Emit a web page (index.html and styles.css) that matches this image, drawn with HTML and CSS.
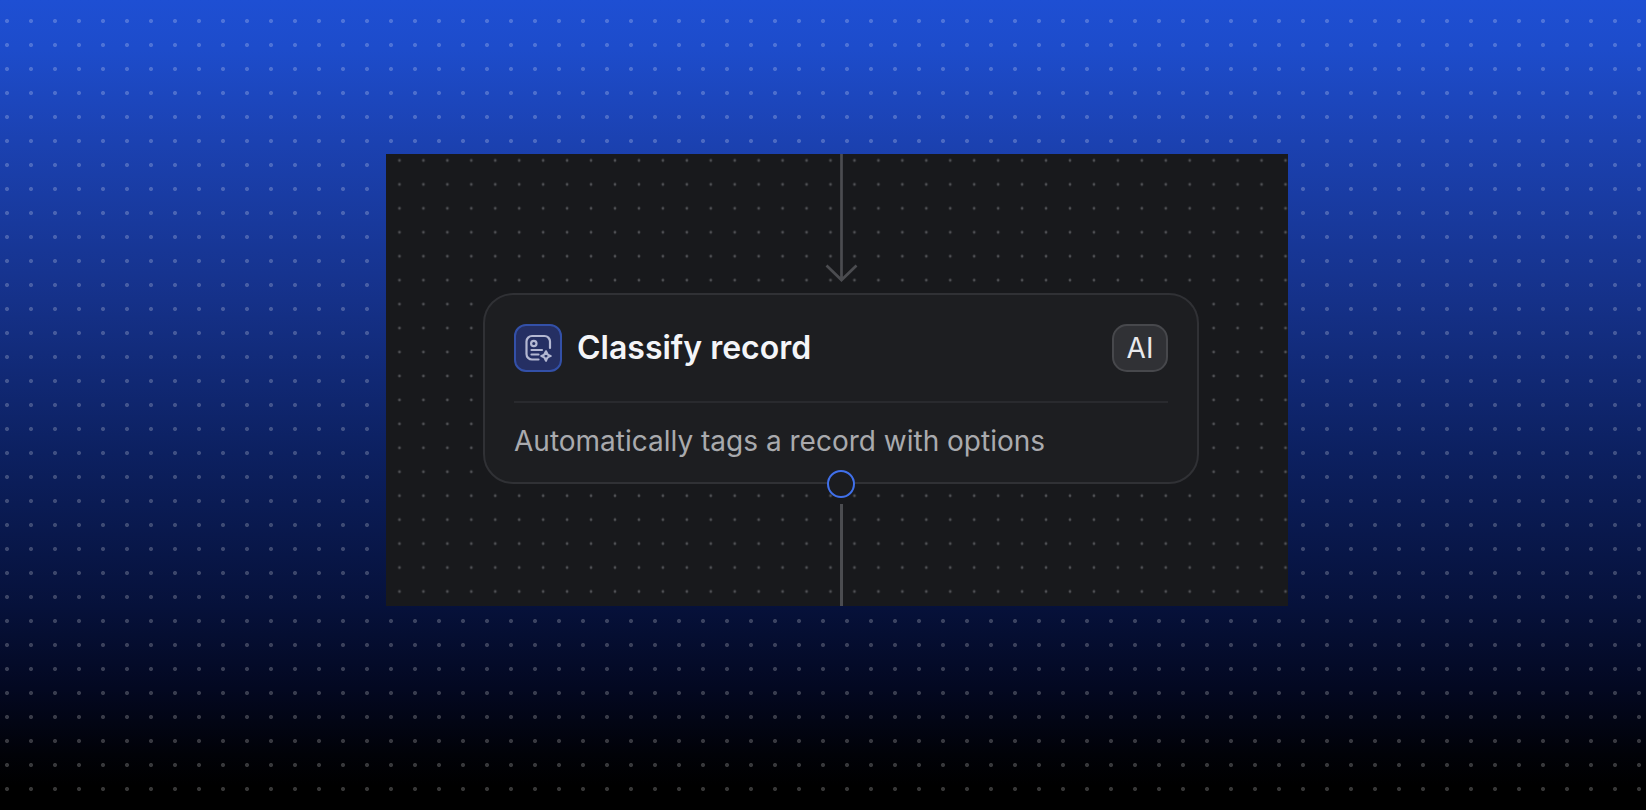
FILE: index.html
```html
<!DOCTYPE html>
<html lang="en">
<head>
<meta charset="utf-8">
<title>Classify record</title>
<link rel="stylesheet" href="styles.css">
</head>
<body>
<main class="stage">
  <section class="canvas">
    <svg class="grid" viewBox="0 0 1812 906" preserveAspectRatio="xMinYMin slice" aria-hidden="true">
      <defs><pattern id="dots" x="3" y="-11" width="48" height="48" patternUnits="userSpaceOnUse"><circle cx="24" cy="24" r="2.8" fill="#4f5054"/></pattern></defs>
      <rect width="1812" height="912" fill="url(#dots)"/>
    </svg>
    <svg class="arrow" viewBox="0 0 34 128" fill="none" stroke="#4b4c50" stroke-width="2.7" aria-hidden="true">
      <path d="M17.500 0V126M2.500 111.500 17.500 126l15-14.500"/>
    </svg>
    <article class="card">
      <header class="head">
        <svg class="icon" viewBox="0 0 48 48" fill="none" aria-hidden="true">
          <rect x="1" y="1" width="46" height="46" rx="11" fill="#252f63" stroke="#3350a8" stroke-width="2"/>
          <g stroke="#b4b8d2" stroke-width="2.2" stroke-linecap="round" stroke-linejoin="round">
            <path d="M24.500 35.500h-6.500a5.500 5.500 0 0 1-5.500-5.500V17.500a5.500 5.500 0 0 1 5.500-5.500h12.500a5.500 5.500 0 0 1 5.500 5.500v6.500"/>
            <circle cx="19.800" cy="19.500" r="2.700"/>
            <path d="M17.500 26h10.500M17.500 30.500h7"/>
            <path d="M32 27.300q.9 3.900 4.700 4.700-3.800.8-4.700 4.700-.9-3.900-4.700-4.700 3.800-.8 4.700-4.700z"/>
          </g>
        </svg>
        <h1 class="title">Classify record</h1>
        <span class="tag">AI</span>
      </header>
      <p class="desc">Automatically tags a record with options</p>
      <span class="port"></span>
    </article>
    <div class="line"></div>
  </section>
</main>
</body>
</html>
```
FILE: styles.css
```css
* { box-sizing: border-box; }
body {
  margin: 0;
  min-height: 100vh;
  font-family: Inter, "Liberation Sans", sans-serif;
  background:
    radial-gradient(circle, rgba(255, 255, 255, 0.21) 1.6px, transparent 2.4px) -5px 9px / 24px 24px,
    linear-gradient(#1e4fd3 0%, #1d4ccb 6%, #1b41b0 18%, #153189 37%, #0c2060 56%, #06113a 75%, #030821 85%, #010208 93%, #000 97%);
}
.stage { padding: 154px 358px 48px 386px; }
.canvas {
  position: relative;
  display: flex;
  flex-direction: column;
  background: #18191c;
}
.grid {
  position: absolute;
  inset: 0;
  width: 100%;
  height: 100%;
}
.arrow {
  position: relative;
  align-self: center;
  width: 34px;
  height: 128px;
  margin: 0 0 11px 8px;
}
.card {
  position: relative;
  margin: 0 89px 0 97px;
  padding: 29px;
  border: 2px solid #303135;
  border-radius: 30px;
  background: #1d1e21;
}
.head {
  display: flex;
  align-items: center;
  gap: 15px;
  padding-bottom: 29px;
  border-bottom: 2px solid #292a2e;
}
.icon { width: 48px; height: 48px; }
.title {
  flex: 1;
  margin: 0;
  font-size: 32px;
  line-height: 40px;
  font-weight: 600;
  color: #f4f5f8;
}
.tag {
  width: 56px;
  height: 48px;
  border: 2px solid #47484c;
  border-radius: 15px;
  background: #303135;
  color: #e8e9ed;
  font-size: 28px;
  line-height: 44px;
  text-align: center;
}
.desc {
  margin: 18px 0 -8px;
  font-size: 28px;
  line-height: 40px;
  color: #a9aaae;
}
.port {
  position: absolute;
  left: 50%;
  bottom: -16px;
  width: 28px;
  height: 28px;
  margin-left: -14px;
  border: 2px solid #4070ea;
  border-radius: 50%;
  background: #1b1c1f;
}
.line {
  position: relative;
  align-self: center;
  width: 3px;
  height: 102px;
  margin: 20px 0 0 8px;
  background: #4b4c50;
}
```
